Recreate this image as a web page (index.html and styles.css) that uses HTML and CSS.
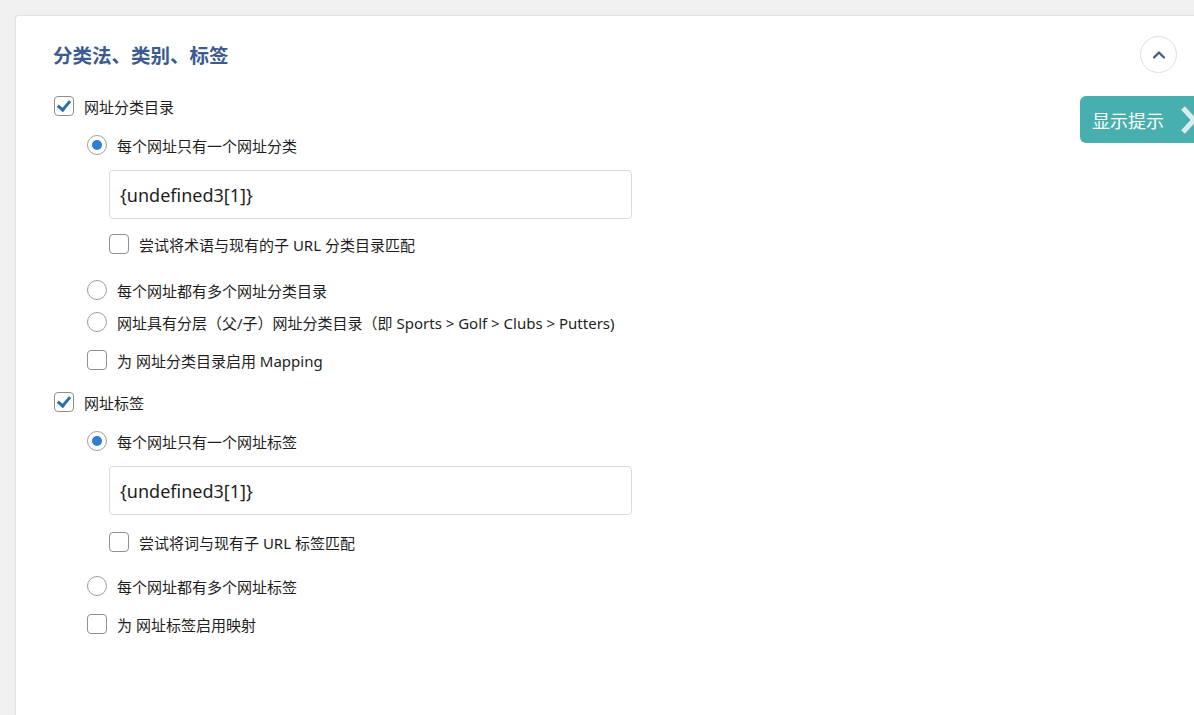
FILE: index.html
```html
<!DOCTYPE html>
<html lang="zh-CN">
<head>
    <meta charset="UTF-8">
    <meta name="viewport" content="width=device-width, initial-scale=1.0">
    <title>分类法、类别、标签</title>
    <link rel="stylesheet" href="styles.css">
</head>
<body>

<div class="settings-card">
    <!-- Header -->
    <div class="card-header">
        <h2>分类法、类别、标签</h2>
        <button class="collapse-btn" title="收起">
            <svg width="14" height="10" viewBox="0 0 14 10"><path d="M2 7.5 L7 2.5 L12 7.5" fill="none" stroke="#3d5a8a" stroke-width="2.2" stroke-linecap="round" stroke-linejoin="round"/></svg>
        </button>
    </div>

    <button class="hint-btn">显示提示
        <svg width="18" height="28" viewBox="0 0 18 28"><path d="M3 2 L14 14 L3 26" fill="none" stroke="#d9ebeb" stroke-width="5"/></svg>
    </button>

    <!-- Categories -->
    <div class="option-row top-first">
        <span class="check checked"></span>
        <span class="label">网址分类目录</span>
    </div>
    <div class="sub-group">
        <div class="option-row gap-15">
            <span class="radio selected"></span>
            <span class="label">每个网址只有一个网址分类</span>
        </div>
        <div class="nested">
            <input type="text" class="text-input" value="{undefined3[1]}">
            <div class="option-row gap-13">
                <span class="check"></span>
                <span class="label">尝试将术语与现有的子 URL 分类目录匹配</span>
            </div>
        </div>
        <div class="option-row gap-22">
            <span class="radio"></span>
            <span class="label">每个网址都有多个网址分类目录</span>
        </div>
        <div class="option-row gap-8">
            <span class="radio"></span>
            <span class="label">网址具有分层（父/子）网址分类目录（即 Sports &gt; Golf &gt; Clubs &gt; Putters)</span>
        </div>
        <div class="option-row gap-14">
            <span class="check"></span>
            <span class="label">为 网址分类目录启用 Mapping</span>
        </div>
    </div>

    <!-- Tags -->
    <div class="option-row gap-18">
        <span class="check checked"></span>
        <span class="label">网址标签</span>
    </div>
    <div class="sub-group">
        <div class="option-row gap-15">
            <span class="radio selected"></span>
            <span class="label">每个网址只有一个网址标签</span>
        </div>
        <div class="nested">
            <input type="text" class="text-input" value="{undefined3[1]}">
            <div class="option-row gap-15">
                <span class="check"></span>
                <span class="label">尝试将词与现有子 URL 标签匹配</span>
            </div>
        </div>
        <div class="option-row gap-20">
            <span class="radio"></span>
            <span class="label">每个网址都有多个网址标签</span>
        </div>
        <div class="option-row gap-14">
            <span class="check"></span>
            <span class="label">为 网址标签启用映射</span>
        </div>
    </div>
</div>

</body>
</html>
```

FILE: styles.css
```css
body {
  margin: 0;
  padding: 15px 0 0 15px;
  background-color: #f0f0f0;
  font-family: "Noto Sans", "Noto Sans CJK SC", sans-serif;
  color: #1e1e1e;
  overflow: hidden;
  height: 715px;
  box-sizing: border-box;
}

/* Card */
.settings-card {
  position: relative;
  box-sizing: border-box;
  background-color: #fff;
  border: 1px solid #e2e2e2;
  border-bottom: none;
  border-radius: 4px 4px 0 0;
  margin-right: -20px;
  height: 700px;
  padding: 20px 36px 0 38px;
}

.card-header {
  display: flex;
  justify-content: space-between;
  align-items: center;
}

.card-header h2 {
  margin: 0 0 0 -1px;
  font-size: 19.5px;
  line-height: 36px;
  font-weight: bold;
  color: #3b5a8f;
  font-family: "Noto Sans CJK SC", sans-serif;
}

.collapse-btn {
  width: 37px;
  height: 37px;
  border-radius: 50%;
  border: 1px solid #dcdfe6;
  background: #fff;
  display: flex;
  align-items: center;
  justify-content: center;
  padding: 0;
  cursor: pointer;
}

.hint-btn {
  position: absolute;
  top: 80px;
  left: 1064px;
  height: 47px;
  width: 140px;
  border: none;
  border-radius: 6px 0 0 6px;
  background-color: #48afaf;
  color: #fff;
  font-size: 18px;
  font-family: "Noto Sans CJK SC", sans-serif;
  display: flex;
  align-items: center;
  padding: 0 0 0 12px;
  gap: 16px;
}

/* Options */
.option-row {
  display: flex;
  align-items: center;
  height: 24px;
}

.top-first { margin-top: 21px; }
.gap-8 { margin-top: 8px; }
.gap-13 { margin-top: 13px; }
.gap-14 { margin-top: 14px; }
.gap-15 { margin-top: 15px; }
.gap-18 { margin-top: 18px; }
.gap-20 { margin-top: 20px; }
.gap-22 { margin-top: 22px; }

.label {
  font-size: 15px;
  margin-left: 10px;
  white-space: nowrap;
}

.sub-group {
  margin-left: 33px;
}

.nested {
  margin-left: 22px;
}

.check {
  position: relative;
  width: 18px;
  height: 18px;
  border: 1px solid #8d9096;
  border-radius: 4px;
  flex-shrink: 0;
}

.check.checked::after {
  content: "";
  position: absolute;
  left: 5px;
  top: 1px;
  width: 5px;
  height: 10px;
  border: solid #2f6db3;
  border-width: 0 3px 3px 0;
  transform: rotate(40deg);
}

.radio {
  position: relative;
  width: 18px;
  height: 18px;
  border: 1px solid #9a9da3;
  border-radius: 50%;
  flex-shrink: 0;
}

.radio.selected::after {
  content: "";
  position: absolute;
  left: 4px;
  top: 4px;
  width: 10px;
  height: 10px;
  border-radius: 50%;
  background-color: #2f7fd0;
}

.text-input {
  display: block;
  margin-top: 13px;
  width: 523px;
  height: 49px;
  box-sizing: border-box;
  border: 1px solid #dcdcdc;
  border-radius: 4px;
  padding: 0 10px;
  font-size: 18px;
  font-family: "Noto Sans", sans-serif;
  color: #1e1e1e;
}
```
